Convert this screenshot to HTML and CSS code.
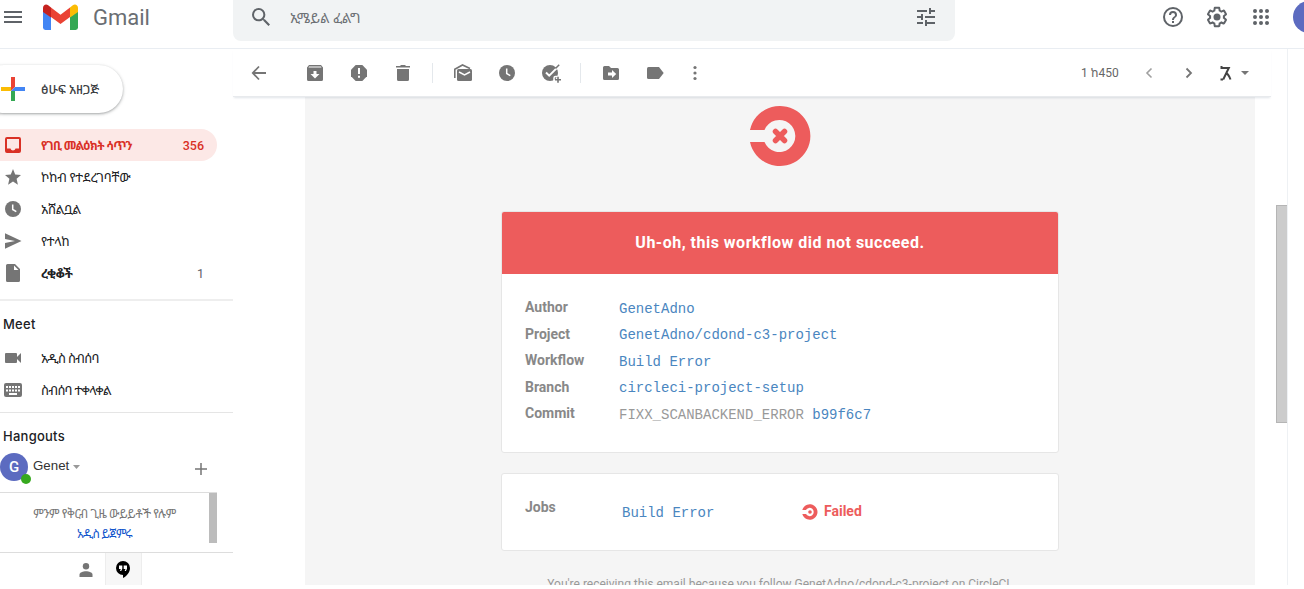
FILE: index.html
```html
<!DOCTYPE html>
<html lang="am">
<head>
<meta charset="utf-8">
<title>Gmail</title>
<link rel="stylesheet" href="styles.css">
</head>
<body>
<div class="app">
  <header class="header">
    <div class="brand">
      <svg class="menu" width="18" height="12" viewBox="0 0 18 12" fill="#5f6368"><path d="M0 0h18v2H0zM0 5h18v2H0zM0 10h18v2H0z"/></svg>
      <svg class="logo" width="35" height="26" viewBox="0 0 35 26">
        <path fill="#4285f4" d="M0 7l8 6v13H2.4A2.4 2.4 0 0 1 0 23.6z"/>
        <path fill="#34a853" d="M27 13l8-6v16.600a2.400 2.400 0 0 1-2.400 2.400H27z"/>
        <path fill="#ea4335" d="M8 3.500l9.500 7.200L27 3.500V13l-9.500 7L8 13z"/>
        <path fill="#fbbc04" d="M27 3.500l2.800-2.200C32 -.4 35 1 35 4v4l-8 5.500z"/>
        <path fill="#c5221f" d="M8 3.500L5.200 1.300C3-.4 0 1 0 4v4l8 5.500z"/>
      </svg>
      <span class="wordmark">Gmail</span>
    </div>
    <div class="search">
      <svg width="18" height="18" viewBox="3 3 17.500 17.500" fill="#5f6368"><path d="M15.500 14h-.79l-.28-.27A6.470 6.470 0 0 0 16 9.500 6.500 6.500 0 1 0 9.500 16c1.610 0 3.090-.59 4.230-1.570l.27.28v.79l5 4.990L20.490 19zm-6 0C7.010 14 5 11.990 5 9.500S7.010 5 9.500 5 14 7.010 14 9.500 11.990 14 9.500 14z"/></svg>
      <span class="search-text">ኢሜይል ፈልግ</span>
      <svg width="18" height="18" viewBox="3 3 18 18" fill="#5f6368"><path d="M3 17v2h6v-2zM3 5v2h10V5zm10 16v-2h8v-2h-8v-2h-2v6zM7 9v2H3v2h4v2h2V9zm14 4v-2H11v2zm-6-4h2V7h4V5h-4V3h-2z"/></svg>
    </div>
    <div class="header-tools">
      <svg width="24" height="24" viewBox="0 0 24 24" fill="#5f6368"><path d="M11 18h2v-2h-2zm1-16a10 10 0 1 0 0 20 10 10 0 0 0 0-20zm0 18a8 8 0 1 1 0-16 8 8 0 0 1 0 16zm0-14a4 4 0 0 0-4 4h2a2 2 0 1 1 4 0c0 2-3 1.750-3 5h2c0-2.250 3-2.500 3-5a4 4 0 0 0-4-4z"/></svg>
      <svg width="24" height="24" viewBox="0 0 24 24" fill="#5f6368"><path d="M13.850 22.250h-3.700c-.74 0-1.360-.54-1.450-1.270l-.27-1.890c-.27-.14-.53-.29-.79-.46l-1.800.72c-.7.260-1.470-.03-1.810-.65L2.200 15.530c-.35-.66-.2-1.440.36-1.880l1.530-1.190a6.900 6.900 0 0 1 0-.92l-1.520-1.190c-.59-.45-.74-1.260-.37-1.880l1.850-3.190c.34-.62 1.110-.9 1.790-.63l1.810.73c.26-.17.52-.32.78-.46l.27-1.910c.09-.7.710-1.250 1.440-1.250h3.700c.74 0 1.360.54 1.450 1.270l.27 1.890c.27.14.53.29.79.46l1.800-.72c.71-.26 1.480.03 1.820.65l1.840 3.180c.36.66.2 1.440-.36 1.880l-1.520 1.190a6.900 6.900 0 0 1 0 .92l1.520 1.190c.56.45.72 1.230.37 1.860l-1.860 3.220c-.34.62-1.110.9-1.800.63l-1.800-.72c-.26.17-.52.32-.78.46l-.27 1.910c-.1.680-.72 1.220-1.460 1.220zm-3.230-2h2.760l.37-2.550.53-.22c.44-.18.88-.44 1.340-.78l.45-.34 2.380.96 1.380-2.400-2.030-1.580.07-.56a6.400 6.400 0 0 0 0-1.560l-.07-.56 2.030-1.580-1.390-2.400-2.390.96-.45-.35c-.42-.32-.87-.58-1.330-.77l-.52-.22-.37-2.550h-2.760l-.37 2.550-.53.21c-.44.190-.88.440-1.340.79l-.45.330-2.380-.95-1.390 2.390 2.030 1.580-.07.560a7 7 0 0 0 0 1.560l.07.560-2.030 1.580 1.380 2.400 2.390-.96.45.350c.43.330.86.580 1.330.770l.53.220z"/><circle cx="12" cy="12" r="3.500"/></svg>
      <svg width="16" height="16" viewBox="0 0 16 16"><path d="M2 2h.01M8 2h.01M14 2h.01M2 8h.01M8 8h.01M14 8h.01M2 14h.01M8 14h.01M14 14h.01" stroke="#5f6368" stroke-width="4" stroke-linecap="round"/></svg>
      <div class="account"></div>
    </div>
  </header>

  <div class="body">
    <aside class="sidebar">
      <div class="compose">
        <svg width="24" height="24" viewBox="0 0 24 24"><path fill="#ea4335" d="M10 0h4v10l-4 4z"/><path fill="#fbbc04" d="M0 10h10v4H0z"/><path fill="#4285f4" d="M14 10h10v4H10z"/><path fill="#34a853" d="M10 14h4v10h-4z"/></svg>
        <span class="compose-label">ፅሁፍ አዘጋጅ</span>
      </div>
      <nav class="nav">
        <div class="item selected"><svg width="20" height="20" viewBox="0 0 20 20"><path fill="#d93025" fill-rule="evenodd" d="M4 2h12a2 2 0 0 1 2 2v12a2 2 0 0 1-2 2H4a2 2 0 0 1-2-2V4a2 2 0 0 1 2-2zm0 2v9.500h3.500c.3 1.300 1.300 2 2.500 2s2.200-.7 2.500-2H16V4z"/></svg><span class="label">የገቢ መልዕክት ሳጥን</span><span class="count">356</span></div>
        <div class="item"><svg width="20" height="20" viewBox="0 0 20 20" fill="#757575"><path d="M10 14.500l4.900 3.200-1.300-5.900L18 7.900l-5.800-.5L10 2 7.800 7.400 2 7.900l4.400 3.900-1.300 5.900z"/></svg><span class="label">ኮከብ የተደረገባቸው</span></div>
        <div class="item"><svg width="20" height="20" viewBox="0 0 20 20"><circle cx="10" cy="10" r="8" fill="#757575"/><path d="M9.700 5.500v5l3.600 2.200" fill="none" stroke="#fff" stroke-width="1.500"/></svg><span class="label">አሸልቧል</span></div>
        <div class="item"><svg width="20" height="20" viewBox="0 0 20 20" fill="#757575"><path d="M2 2.200L18.500 10 2 17.800v-5.800L12 10 2 8z"/></svg><span class="label">የተላከ</span></div>
        <div class="item drafts"><svg width="20" height="20" viewBox="0 0 20 20"><path fill="#757575" fill-rule="evenodd" d="M4.500 1H12l5 5v11.500a1.500 1.500 0 0 1-1.500 1.500h-11A1.500 1.500 0 0 1 3 17.500v-15A1.500 1.500 0 0 1 4.500 1zM11 2.500V7h4.500z"/></svg><span class="label">ረቂቆች</span><span class="count">1</span></div>
      </nav>
      <section class="meet">
        <h2>Meet</h2>
        <div class="item"><svg width="20" height="20" viewBox="0 0 20 20" fill="#757575"><path d="M3 5h10a1 1 0 0 1 1 1v3l4-4v10l-4-4v3a1 1 0 0 1-1 1H3a1 1 0 0 1-1-1V6a1 1 0 0 1 1-1z"/></svg><span class="label new-meeting">አዲስ ስብሰባ</span></div>
        <div class="item"><svg width="20" height="20" viewBox="0 0 20 20"><rect x="1" y="3" width="18" height="14" rx="2" fill="#757575"/><path d="M3 7h14M3 10.500h14" stroke="#fff" stroke-width="2" stroke-dasharray="2 1"/><path d="M6 14h8" stroke="#fff" stroke-width="2"/></svg><span class="label join-meeting">ስብሰባ ተቀላቀል</span></div>
      </section>
      <section class="hangouts">
        <h2>Hangouts</h2>
        <div class="user">
          <div class="avatar">G<i class="presence"></i></div>
          <span class="user-name">Genet</span>
          <svg width="7" height="4" viewBox="0 0 7 4"><path d="M0 0h7L3.500 4z" fill="#999"/></svg>
          <svg class="add" width="12" height="12" viewBox="0 0 12 12"><path d="M6 0v12M0 6h12" stroke="#757575" stroke-width="1.500"/></svg>
        </div>
        <div class="chats"><div class="chats-text"><p>ምንም የቅርብ ጊዜ ውይይቶች የሉም</p><a>አዲስ ይጀምሩ</a></div><div class="chat-thumb"></div></div>
      </section>
      <div class="tabs">
        <div class="tab"><svg width="14" height="14" viewBox="0 0 14 14" fill="#757575"><circle cx="7" cy="3.300" r="3.200"/><path d="M.5 14v-2.300C.5 9.500 4 8.300 7 8.300s6.500 1.200 6.500 3.400V14z"/></svg></div>
        <div class="tab active"><svg width="14" height="17" viewBox="0 0 14 17"><path d="M7 0a7 7 0 1 0 0 14v3c4-2 7-5.700 7-10a7 7 0 0 0-7-7z"/><path fill="#fff" d="M3 4.500h3.300v3.300L5.200 10H4l.8-2H3zm4.700 0H11v3.300L9.900 10H8.700l.8-2H7.700z"/></svg></div>
      </div>
    </aside>

    <main class="main">
      <div class="toolbar">
        <div class="cell back"><svg width="20" height="20" viewBox="0 0 20 20"><path d="M17 10H4M10 3.500L3.800 10l6.200 6.500" fill="none" stroke="#757575" stroke-width="1.800"/></svg></div>
        <div class="cell"><svg width="20" height="20" viewBox="0 0 20 20"><path fill="#757575" fill-rule="evenodd" d="M4 2h12l2 2.500V16.500a1.500 1.500 0 0 1-1.500 1.500h-13A1.500 1.500 0 0 1 2 16.500v-12zM4 3.500l-.5 1h13l-.5-1zM8.500 8v3H5.500l4.500 4.500 4.500-4.500h-3V8z"/></svg></div>
        <div class="cell"><svg width="20" height="20" viewBox="0 0 20 20"><path fill="#757575" d="M6.700 2h6.600L18 6.700v6.600L13.300 18H6.700L2 13.300V6.700z"/><path fill="#fff" d="M9 5h2v6H9zM9 12.700h2v2H9z"/></svg></div>
        <div class="cell"><svg width="20" height="20" viewBox="0 0 20 20" fill="#757575"><path d="M4 6h12v10.500a1.500 1.500 0 0 1-1.500 1.500h-9A1.500 1.500 0 0 1 4 16.500zM3 3h4l1-1h4l1 1h4v1.500H3z"/></svg></div>
        <div class="sep"></div>
        <div class="cell"><svg width="20" height="20" viewBox="0 0 20 20"><path d="M1.800 15V6.200L9.500 2l7.500 3.500" fill="none" stroke="#757575" stroke-width="1.600"/><rect x="4" y="6" width="15" height="12" rx="1.500" fill="#757575"/><path d="M6 9l5.500 3L17 9" fill="none" stroke="#fff" stroke-width="1.500"/></svg></div>
        <div class="cell"><svg width="20" height="20" viewBox="0 0 20 20"><circle cx="10" cy="10" r="8" fill="#757575"/><path d="M9.700 5.500v5l3.600 2.200" fill="none" stroke="#fff" stroke-width="1.500"/></svg></div>
        <div class="cell"><svg width="20" height="20" viewBox="0 0 20 20"><circle cx="9" cy="10" r="8" fill="#757575"/><path d="M5 9.500l3.200 3.200L17 3.900" fill="none" stroke="#fff" stroke-width="2"/><path d="M14.500 5.500l3.700-3.700" stroke="#757575" stroke-width="1.500"/><path d="M13 20v-5a1.500 1.500 0 0 1 1.500-1.500H20" fill="none" stroke="#fff" stroke-width="1.500"/><path d="M17 13.800v6M14 16.800h6" stroke="#757575" stroke-width="1.600"/></svg></div>
        <div class="sep"></div>
        <div class="cell"><svg width="20" height="20" viewBox="0 0 20 20"><path fill="#757575" d="M3.500 3H8l2 2h6.500A1.500 1.500 0 0 1 18 6.500v9a1.500 1.500 0 0 1-1.500 1.500h-13A1.500 1.500 0 0 1 2 15.500v-11A1.500 1.500 0 0 1 3.500 3z"/><path fill="#fff" d="M7 9.500h4V7l4.200 4-4.200 4v-2.500H7z"/></svg></div>
        <div class="cell"><svg width="20" height="20" viewBox="0 0 20 20" fill="#757575"><path d="M3.500 4H14l4.700 6L14 16H3.500A1.500 1.500 0 0 1 2 14.500v-9A1.500 1.500 0 0 1 3.500 4z"/></svg></div>
        <div class="cell more"><svg width="20" height="20" viewBox="0 0 20 20" fill="#757575"><circle cx="10" cy="4.500" r="1.600"/><circle cx="10" cy="10" r="1.600"/><circle cx="10" cy="15.500" r="1.600"/></svg></div>
        <span class="pager">1 ከ450</span>
        <svg class="prev" width="8" height="12" viewBox="0 0 8 12"><path d="M6.500 1.500L2 6l4.500 4.500" fill="none" stroke="#a0a0a0" stroke-width="1.600"/></svg>
        <svg class="next" width="8" height="12" viewBox="0 0 8 12"><path d="M1.500 1.500L6 6l-4.500 4.500" fill="none" stroke="#757575" stroke-width="1.800"/></svg>
        <svg class="lang-icon" width="12" height="15" viewBox="0 0 12 15"><path d="M1.500 0v2h7.300L3.200 13.500M5.500 6.500q3 1.500 5 7M.5 13.500H3" fill="none" stroke="#444" stroke-width="2"/></svg>
        <svg width="8" height="4" viewBox="0 0 8 4"><path d="M0 0h8L4 4z" fill="#757575"/></svg>
      </div>
      <div class="reader">
        <div class="mail">
          <svg class="ci-logo" width="62" height="60" viewBox="0 0 62 60"><path fill="#ed5c5c" d="M1 24A30.500 30 0 1 1 1 36H15.500a16 16 0 1 0 0-12z"/><path d="M26.500 25.500l9 9M35.500 25.500l-9 9" stroke="#ed5c5c" stroke-width="5.500" stroke-linecap="round"/></svg>
          <div class="card">
            <div class="banner"><span class="banner-text">Uh-oh, this workflow did not succeed.</span></div>
            <dl class="facts">
              <dt>Author</dt><dd><a>GenetAdno</a></dd>
              <dt>Project</dt><dd><a>GenetAdno/cdond-c3-project</a></dd>
              <dt>Workflow</dt><dd><a>Build Error</a></dd>
              <dt>Branch</dt><dd><a>circleci-project-setup</a></dd>
              <dt>Commit</dt><dd>FIXX_SCANBACKEND_ERROR <a>b99f6c7</a></dd>
            </dl>
          </div>
          <div class="card jobs">
            <span class="jobs-title">Jobs</span>
            <a class="job-name">Build Error</a>
            <svg width="16" height="16" viewBox="0 0 62 60"><path fill="#ed5c5c" d="M1.200 22A30 30 0 1 1 1.200 38H15.500a16 16 0 1 0 0-16z"/><circle cx="31" cy="30" r="7" fill="#ed5c5c"/></svg>
            <span class="failed">Failed</span>
          </div>
          <p class="notice">You're receiving this email because you follow GenetAdno/cdond-c3-project on CircleCI.</p>
        </div>
        <div class="scrollbar"><div class="thumb"></div></div>
      </div>
    </main>
  </div>
</div>
</body>
</html>
```
FILE: styles.css
```css
* { box-sizing: border-box; }
body { margin: 0; background: #fff; overflow: hidden; font-family: Roboto, "Noto Sans Ethiopic", "Noto Sans", sans-serif; color: #202124; }
svg { display: block; flex: none; }
h2, p, dl, dd { margin: 0; }
.app { width: 1304px; height: 585px; overflow: hidden; display: flex; flex-direction: column; }

.header { height: 49px; flex: none; display: flex; align-items: flex-start; border-bottom: 1px solid #e9edf2; }
.brand { width: 233px; display: flex; padding-left: 4px; }
.menu { margin: 11px 21px 0 0; }
.logo { margin: 4px 15px 0 0; }
.wordmark { font-size: 22px; line-height: 26px; margin-top: 5px; color: #6a6e73; }
.search { width: 722px; height: 41px; background: #f1f3f4; border-radius: 0 0 8px 8px; display: flex; align-items: flex-start; padding: 8px 20px 0 19px; }
.search-text { flex: 1; margin-left: 20px; font-size: 14px; line-height: 20px; color: #6d7175; white-space: nowrap; }
.header-tools { flex: 1; display: flex; align-items: center; height: 34px; padding-left: 206px; gap: 20px; overflow: hidden; }
.header-tools svg:nth-child(3) { margin-left: 4px; }
.account { width: 32px; height: 32px; border-radius: 50%; background: #5c6bc0; flex: none; margin-left: 4px; }

.body { flex: 1; min-height: 0; display: flex; }
.sidebar { width: 233px; flex: none; display: flex; flex-direction: column; font-size: 13px; overflow: hidden; }
.compose { width: 143px; height: 48px; flex: none; margin: 16px 0 16px -20px; border-radius: 24px; display: flex; align-items: center; padding-left: 21px; gap: 16px; box-shadow: 0 1px 2px rgba(60,64,67,.3), 0 1px 3px 1px rgba(60,64,67,.15); }
.compose-label { color: #3c4043; font-size: 12.500px; font-weight: 500; white-space: nowrap; }
.item { height: 32px; width: 217px; display: flex; align-items: center; padding: 0 13px 0 3px; }
.label { margin-left: 18px; flex: 1; white-space: nowrap; line-height: 20px; padding-top: 1px; letter-spacing: -.25px; }
.selected { background: #fce8e6; color: #d93025; border-radius: 0 16px 16px 0; font-weight: 700; }
.selected .label { font-size: 12px; letter-spacing: -.65px; }
.count { font-size: 12.500px; }
.selected .count { font-weight: 500; }
.drafts .label { font-weight: 700; }
.drafts .count { color: #5f6368; }
.nav { height: 172px; flex: none; border-bottom: 2px solid #eee; }
.meet { height: 112px; flex: none; border-bottom: 1px solid #e5e5e5; }
.new-meeting, .join-meeting { letter-spacing: -.65px; }
h2 { font: 500 13px/20px Inter, sans-serif; padding: 13px 0 8px 3px; letter-spacing: .25px; color: #202124; }
.hangouts { height: 140px; flex: none; border-bottom: 1px solid #ddd; }
.hangouts h2 { padding-bottom: 6px; }
.user { height: 40px; display: flex; align-items: flex-start; }
.avatar { width: 28px; height: 28px; margin-top: 1px; border-radius: 50%; background: #5c6bc0; color: #fff; text-align: center; font: 500 15px/28px Roboto, sans-serif; position: relative; }
.presence { position: absolute; right: -3px; bottom: -3px; width: 10px; height: 10px; border-radius: 50%; background: #36a91e; }
.user-name { font: 13.300px/20px "Liberation Sans", Arial, sans-serif; margin: 4px 4px 0 5px; color: #333; }
.user svg { margin-top: 13px; }
.user .add { margin: 11px 0 0 115px; }
.chats { width: 217px; border-top: 1px solid #ddd; display: flex; height: 60px; }
.chats-text { width: 209px; text-align: center; padding-top: 11px; line-height: 20px; font-size: 12px; color: #777; white-space: nowrap; letter-spacing: -.37px; }
.chats-text a { color: #15c; letter-spacing: -.7px; }
.chat-thumb { width: 8px; height: 50px; background: #bcbcbc; }
.tabs { display: flex; padding-left: 68px; height: 33px; flex: none; }
.tab { width: 37px; display: flex; align-items: center; justify-content: center; padding-right: 1px; }
.tab.active { background: #f7f7f7; border: 1px solid #ededed; border-width: 0 1px; }

.main { width: 1055px; flex: none; border-right: 1px solid #eef1f4; display: flex; flex-direction: column; }
.toolbar { width: 1038px; height: 48px; flex: none; display: flex; align-items: center; padding-left: 4px; border-bottom: 1px solid #e8eaed; box-shadow: 0 2px 2px -1px rgba(100,121,143,.2); position: relative; z-index: 1; }
.cell { width: 44px; display: flex; justify-content: center; }
.back { margin-right: 12px; }
.more { width: 36px; }
.sep { width: 1px; height: 20px; background: #e4e8ec; margin: 0 8px 0 7px; }
.pager { width: 38px; font-size: 12px; color: #666; margin-left: 368px; white-space: nowrap; }
.prev { margin-left: 26px; }
.next { margin-left: 32px; }
.lang-icon { margin: 2px 9px 0 27px; }
.reader { flex: 1; min-height: 0; display: flex; padding-left: 72px; }
.mail { width: 950px; background: #f5f5f5; display: flex; flex-direction: column; align-items: center; padding-top: 9px; overflow: hidden; }
.ci-logo { margin-bottom: 45px; }
.card { width: 558px; flex: none; background: #fff; border: 1px solid #e6e6e6; border-radius: 3px; margin-bottom: 20px; }
.banner { height: 62px; background: #ed5c5c; border-radius: 2px 2px 0 0; color: #fff; font: 700 16px/61px Roboto, sans-serif; text-align: center; white-space: nowrap; letter-spacing: .5px; }
.facts { height: 178px; padding: 20px 0 0 23px; display: grid; grid-template-columns: 94px 1fr; grid-auto-rows: 26.500px; align-content: start; align-items: center; color: #999; }
dt, .jobs-title { font: 700 14px/20px Roboto, sans-serif; color: #888; }
dd, .job-name { font: 14px/20px "Liberation Mono", "Courier New", monospace; white-space: nowrap; padding-top: 3px; }
.facts a, .job-name { color: #4a86c0; }
.jobs { height: 78px; display: flex; align-items: flex-start; padding: 23px 0 0 23px; }
.jobs-title { width: 97px; }
.job-name { width: 180px; padding-top: 6px; }
.jobs svg { margin-top: 7px; }
.failed { margin: 4px 0 0 6px; color: #ed5c5c; font: 700 14px/20px Roboto, sans-serif; }
.notice { font-size: 12px; line-height: 20px; color: #999; white-space: nowrap; margin-top: 3px; }
.scrollbar { width: 32px; display: flex; justify-content: flex-end; padding-top: 108px; }
.thumb { width: 11px; height: 218px; background: #ccc; border: 1px solid #b5b5b5; border-right: 0; }
```
